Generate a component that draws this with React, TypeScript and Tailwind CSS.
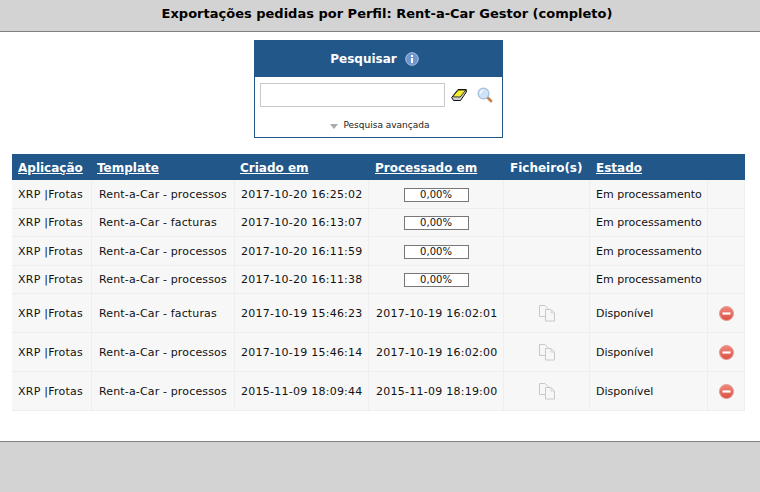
const font = "font-['DejaVu_Sans',Verdana,sans-serif]";

type Row = {
  template: string;
  created: string;
  processed?: string;
};

const rows: Row[] = [
  { template: "Rent-a-Car - processos", created: "2017-10-20 16:25:02" },
  { template: "Rent-a-Car - facturas", created: "2017-10-20 16:13:07" },
  { template: "Rent-a-Car - processos", created: "2017-10-20 16:11:59" },
  { template: "Rent-a-Car - processos", created: "2017-10-20 16:11:38" },
  { template: "Rent-a-Car - facturas", created: "2017-10-19 15:46:23", processed: "2017-10-19 16:02:01" },
  { template: "Rent-a-Car - processos", created: "2017-10-19 15:46:14", processed: "2017-10-19 16:02:00" },
  { template: "Rent-a-Car - processos", created: "2015-11-09 18:09:44", processed: "2015-11-09 18:19:00" },
];

function InfoIcon() {
  return (
    <svg width="14" height="14" viewBox="0 0 14 14" className="ml-[8px]">
      <circle cx="7" cy="7" r="6.3" fill="#6f95cc" stroke="#a9c0e2" strokeWidth="1" />
      <rect x="6" y="3" width="2" height="2" fill="#fff" />
      <rect x="6" y="6" width="2" height="5" fill="#fff" />
    </svg>
  );
}

function EraserIcon() {
  return (
    <svg width="16" height="14" viewBox="0 0 16 14">
      <path d="M0.7 9.5 L7 1.5 H15.3 L15.3 4 L9.5 12.5 H2.5 Z" fill="#cfcfcf" stroke="#111" strokeWidth="1" strokeLinejoin="round" />
      <path d="M1.5 8.8 L7.3 2 H14.8 L9.2 9 Z" fill="#f4ee2e" stroke="#111" strokeWidth="0.8" strokeLinejoin="round" />
    </svg>
  );
}

function SearchIcon() {
  return (
    <svg width="16" height="16" viewBox="0 0 16 16">
      <path d="M10.5 10.5 L14 14" stroke="#c0814a" strokeWidth="2.8" strokeLinecap="round" />
      <circle cx="6.5" cy="6.5" r="5.4" fill="#cfe2f8" stroke="#a5bfde" strokeWidth="1.2" />
      <path d="M3.5 6.5 A3 3 0 0 1 6.5 3.5" stroke="#fff" strokeWidth="1.2" fill="none" />
    </svg>
  );
}

function FilesIcon() {
  return (
    <svg width="18" height="18" viewBox="0 0 18 18" className="mx-auto">
      <path d="M1.5 1.5 H7 L10 4.5 V12.5 H1.5 Z" fill="#f7f7f7" stroke="#c8c8c8" />
      <path d="M7.5 5.5 H13 L16.5 9 V17 H7.5 Z" fill="#f7f7f7" stroke="#c8c8c8" />
      <path d="M13 5.5 V9 H16.5" fill="none" stroke="#d4d4d4" />
    </svg>
  );
}

function RemoveIcon({ id }: { id: string }) {
  return (
    <svg width="15" height="15" viewBox="0 0 15 15" className="mx-auto">
      <defs>
        <linearGradient id={id} x1="0" y1="0" x2="0" y2="1">
          <stop offset="0" stopColor="#f0897e" />
          <stop offset="1" stopColor="#dd4f43" />
        </linearGradient>
      </defs>
      <circle cx="7.5" cy="7.5" r="7" fill={`url(#${id})`} stroke="#e59a90" strokeWidth="1" />
      <rect x="3.5" y="6.4" width="8" height="2.2" fill="#fff" />
    </svg>
  );
}

function Progress() {
  return (
    <div className="mx-auto h-[14px] w-[65px] border border-[#777] bg-white text-center text-[10px] leading-[12px] text-[#111]">
      0,00%
    </div>
  );
}

const cell = "border-b border-r border-[#eeeeee] px-[6px] py-0 whitespace-nowrap";
const textCell = `${cell} pt-[2px]`;
const head = "px-[6px] pt-[1px] text-left font-bold text-white whitespace-nowrap";

export default function App() {
  return (
    <div className={`flex h-[492px] w-[760px] flex-col overflow-hidden bg-white text-[11px] text-[#111] ${font}`}>
      <header className="flex h-[32px] shrink-0 items-center justify-center border-b border-[#808080] bg-[#d3d3d3] pb-[3px] pl-[14px] text-[13px] font-bold text-black">
        Exportações pedidas por Perfil: Rent-a-Car Gestor (completo)
      </header>

      <section className="ml-[254px] mt-[8px] h-[98px] w-[249px] shrink-0 border border-[#22578a]">
        <div className="flex h-[36px] items-center justify-center bg-[#22578a] pr-[8px] text-[12px] font-bold text-white">
          Pesquisar
          <InfoIcon />
        </div>
        <div className="mt-[6px] flex items-center pl-[5px]">
          <input className="h-[24px] w-[185px] border border-[#c8c8c8] bg-white" />
          <span className="ml-[6px] flex"><EraserIcon /></span>
          <span className="ml-[10px] flex"><SearchIcon /></span>
        </div>
        <div className="mt-[12px] flex items-center justify-center pl-[3px] text-[9px] text-[#222]">
          <span className="mr-[5px] mt-[1px] h-0 w-0 border-x-[4px] border-t-[5px] border-x-transparent border-t-[#aaaaaa]" />
          Pesquisa avançada
        </div>
      </section>

      <table className="ml-[12px] mt-[16px] w-[733px] shrink-0 table-fixed border-separate border-spacing-0">
        <colgroup>
          <col className="w-[80px]" />
          <col className="w-[143px]" />
          <col className="w-[134px]" />
          <col className="w-[135px]" />
          <col className="w-[86px]" />
          <col className="w-[118px]" />
          <col className="w-[37px]" />
        </colgroup>
        <thead>
          <tr className="h-[26px] bg-[#22578a] text-[12px]">
            <th className={`${head} underline`}>Aplicação</th>
            <th className={`${head} pl-[5px] underline`}>Template</th>
            <th className={`${head} pl-[5px] underline`}>Criado em</th>
            <th className={`${head} underline`}>Processado em</th>
            <th className={head}>Ficheiro(s)</th>
            <th className={`${head} underline`}>Estado</th>
            <th className={head}></th>
          </tr>
        </thead>
        <tbody>
          {rows.map((row, i) => (
            <tr key={i} className={`bg-[#f7f7f7] ${row.processed ? "h-[39px]" : i === 0 || i === 2 ? "h-[29px]" : "h-[28px]"}`}>
              <td className={`${textCell} tracking-[0.25px]`}>XRP |Frotas</td>
              <td className={`${textCell} pl-[7px] tracking-[0.15px]`}>{row.template}</td>
              <td className={`${textCell} tracking-[0.25px]`}>{row.created}</td>
              <td className={row.processed ? `${textCell} pl-[7px] tracking-[0.25px]` : `${cell} pt-[1px]`}>{row.processed ?? <Progress />}</td>
              <td className={cell}>{row.processed && <FilesIcon />}</td>
              <td className={textCell}>{row.processed ? "Disponível" : "Em processamento"}</td>
              <td className={cell}>{row.processed && <RemoveIcon id={`remove-${i}`} />}</td>
            </tr>
          ))}
        </tbody>
      </table>

      <footer className="mt-auto h-[51px] shrink-0 border-t border-[#808080] bg-[#d3d3d3]" />
    </div>
  );
}
